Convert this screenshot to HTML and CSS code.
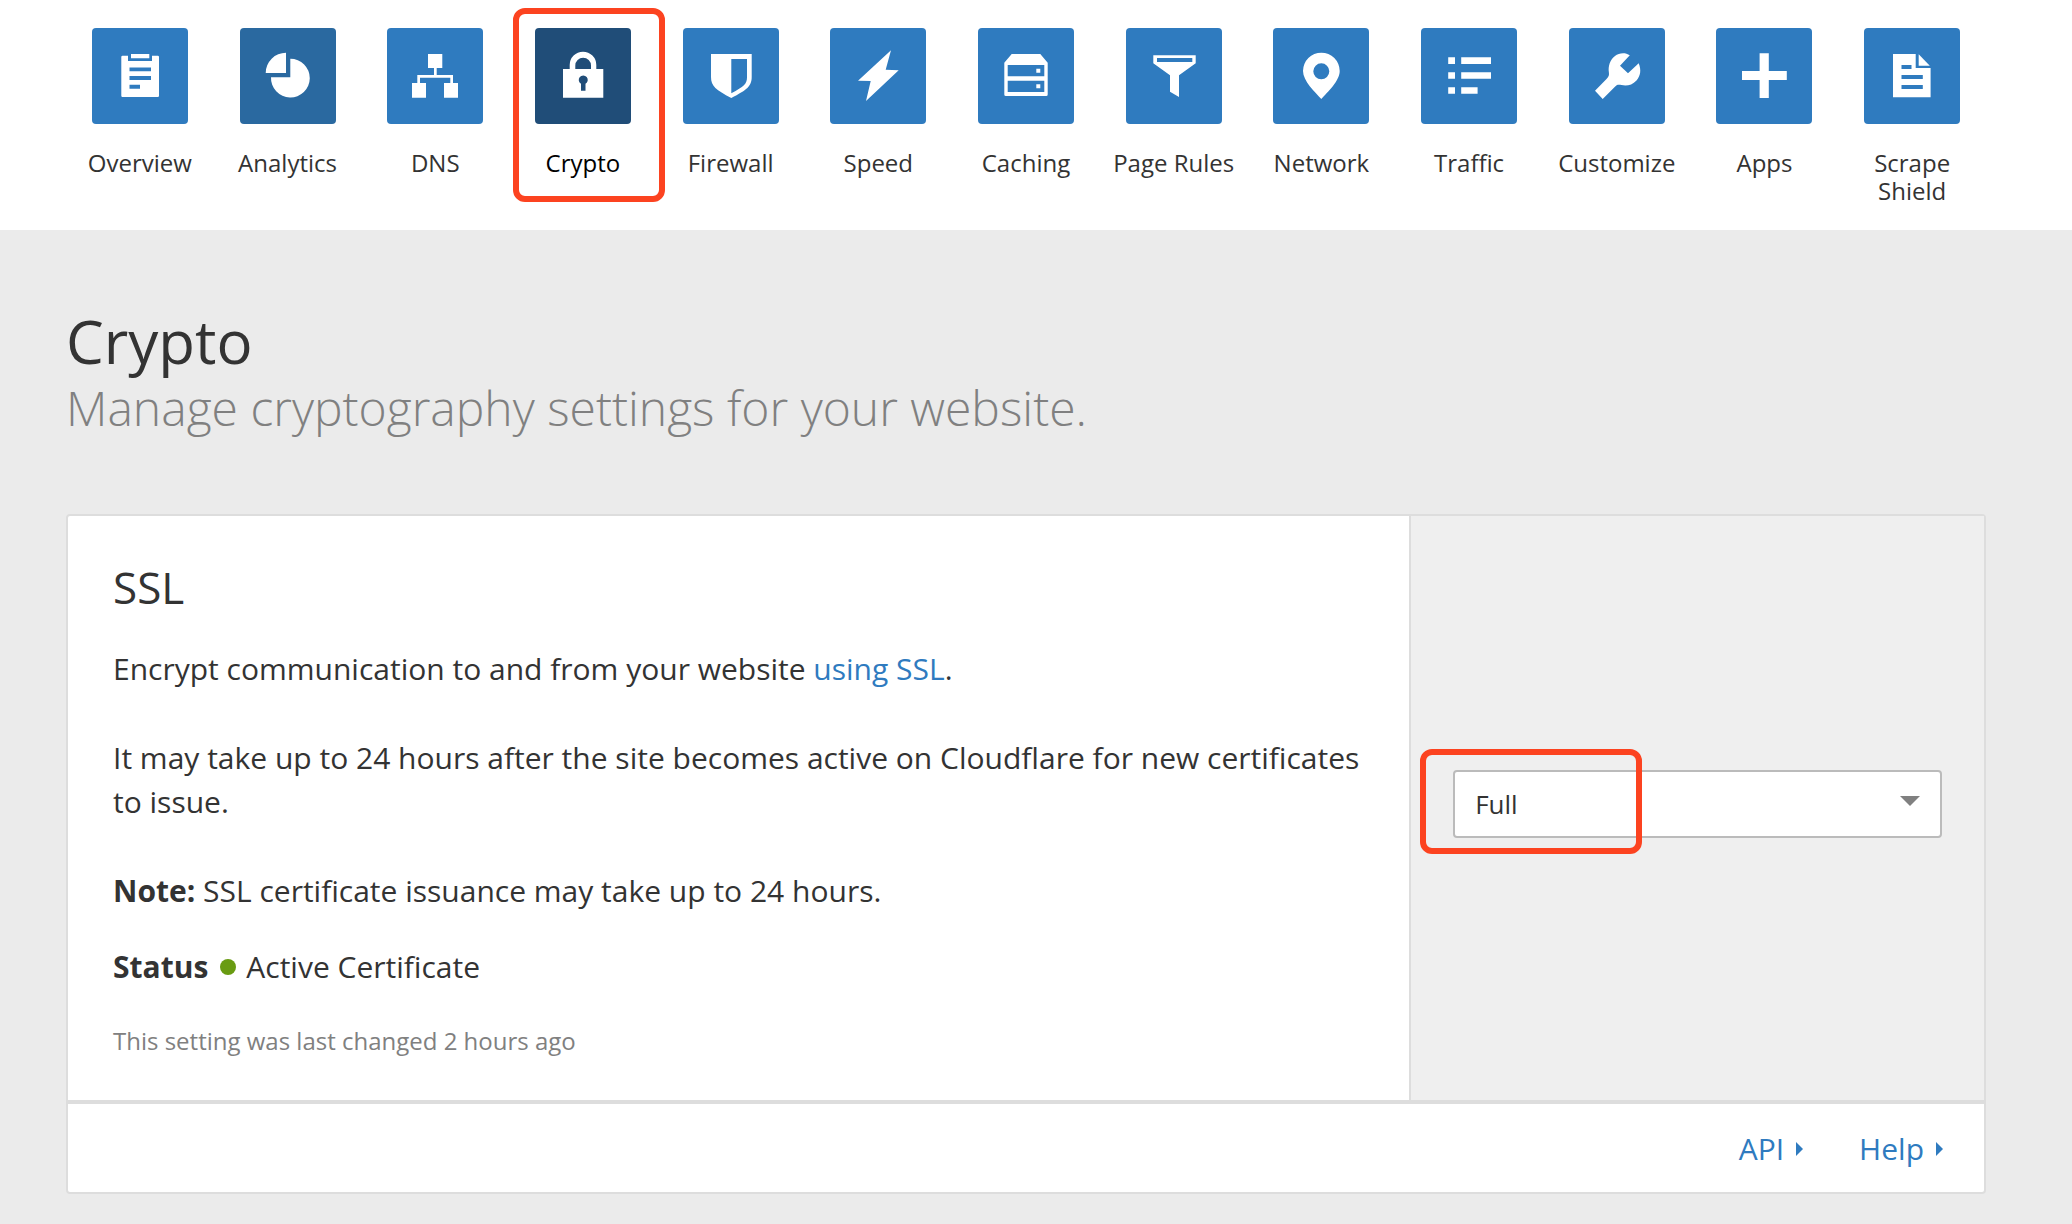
FILE: index.html
```html
<!DOCTYPE html>
<html lang="en">
<head>
  <meta charset="utf-8">
  <meta name="viewport" content="width=device-width, initial-scale=1">
  <title>Crypto</title>
  <link rel="stylesheet" href="styles.css">
</head>
<body>
  <header class="topbar">
    <nav class="nav" aria-label="Site settings">
      <a class="nav-item" href="#">
        <svg class="tile" viewBox="0 0 96 96" aria-hidden="true"><path fill-rule="evenodd" d="M30.500 27.700H36V33H60V27.700H65.800Q67 27.700 67 29V67.700Q67 69 65.800 69H30.500Q29.300 69 29.300 67.700V29Q29.300 27.700 30.500 27.700ZM37.500 39.500V43.300H59V39.500ZM37.500 48V52H59V48ZM37.500 56.700V60.700H48V56.700Z"/><path d="M39 26H57.300V30.300H39Z"/></svg>
        <span class="nav-label">Overview</span>
      </a>
      <a class="nav-item is-hovered" href="#">
        <svg class="tile" viewBox="0 0 96 96" aria-hidden="true"><path d="M46 45H25.700A20.300 20.300 0 0 1 46 24.700ZM50.300 30.700A19.400 19.400 0 1 1 31 49.300H50.300Z"/></svg>
        <span class="nav-label">Analytics</span>
      </a>
      <a class="nav-item" href="#">
        <svg class="tile" viewBox="0 0 96 96" aria-hidden="true"><path d="M41 26H55.300V40H49.700V47H66V55H71V69.700H57V55H63.300V49.700H33V55H39V69.700H25V55H30.300V47H47V40H41Z"/></svg>
        <span class="nav-label">DNS</span>
      </a>
      <a class="nav-item is-current" href="#" aria-current="page">
        <svg class="tile" viewBox="0 0 96 96" aria-hidden="true"><path fill-rule="evenodd" d="M28 41H34.700V37A13.300 13.300 0 0 1 61.300 37V41H68.300V69.700H28ZM40.300 41H56V37.500A7.850 7.850 0 0 0 40.300 37.500ZM46 55.800V62.700H50.500V55.800A4.500 4.500 0 1 0 46 55.800Z"/></svg>
        <span class="nav-label">Crypto</span>
      </a>
      <a class="nav-item" href="#">
        <svg class="tile" viewBox="0 0 96 96" aria-hidden="true"><path fill-rule="evenodd" d="M28 26H68.700V49C68.700 58 64 62 48.300 70C33 62 28 58 28 49ZM48.300 31V65.300C61 58.500 64 56 64 49V31Z"/></svg>
        <span class="nav-label">Firewall</span>
      </a>
      <a class="nav-item" href="#">
        <svg class="tile" viewBox="0 0 96 96" aria-hidden="true"><path d="M61 22.300L55.700 41.700L68.700 42.300L36 73L40.700 53L28 52.700Z"/></svg>
        <span class="nav-label">Speed</span>
      </a>
      <a class="nav-item" href="#">
        <svg class="tile" viewBox="0 0 96 96" aria-hidden="true"><path fill-rule="evenodd" d="M33.700 26H62.300L69.700 34.700V66.500Q69.700 68 68.200 68H27.800Q26.300 68 26.300 66.500V34.700ZM29.700 37V48.300H66.300V37ZM29.700 52.700V64H66.300V52.700Z"/><path d="M58.300 40.700H62.300V44.700H58.300ZM58.300 56.300H62.300V60.300H58.300Z"/></svg>
        <span class="nav-label">Caching</span>
      </a>
      <a class="nav-item" href="#">
        <svg class="tile" viewBox="0 0 96 96" aria-hidden="true"><path fill-rule="evenodd" d="M27.300 27.300H69.700V35.300L53 47.300V69L44 63.700V47.300L27.300 35.300ZM31 30V34H66.300V30Z"/></svg>
        <span class="nav-label">Page Rules</span>
      </a>
      <a class="nav-item" href="#">
        <svg class="tile" viewBox="0 0 96 96" aria-hidden="true"><path fill-rule="evenodd" d="M48.300 71C42 64 30 53 30 43A18.350 18.350 0 0 1 66.700 43C66.700 53 54.600 64 48.300 71ZM48.300 35.300A8 8 0 1 0 48.300 51.300A8 8 0 1 0 48.300 35.300Z"/></svg>
        <span class="nav-label">Network</span>
      </a>
      <a class="nav-item" href="#">
        <svg class="tile" viewBox="0 0 96 96" aria-hidden="true"><path d="M27.200 29.300H34V36H27.200ZM27.200 44.300H34V50.700H27.200ZM27.200 59.300H34V65.700H27.200ZM40.200 29.300H70V36H40.200ZM40.200 44.300H70V50.700H40.200ZM40.200 59.300H56.600V65.700H40.200Z"/></svg>
        <span class="nav-label">Traffic</span>
      </a>
      <a class="nav-item" href="#">
        <svg class="tile" viewBox="0 0 96 96" aria-hidden="true"><path d="M26 62.700L37.500 51C40 48.500 40.200 47 39.900 44.500C39 38 41 32 46 28C50 24.900 56 24 60.800 27.300L51 37.700L59 45.300L69.700 35.300C72.500 42 71.500 48 67.500 52.500C63 57.500 57.500 58 52.500 57.100C49.500 56.600 48 56.700 46.200 58.500L33.700 71Z"/></svg>
        <span class="nav-label">Customize</span>
      </a>
      <a class="nav-item" href="#">
        <svg class="tile" viewBox="0 0 96 96" aria-hidden="true"><path d="M43.600 25.300H52.800V43H70.800V52H52.800V70H43.600V52H26V43H43.600Z"/></svg>
        <span class="nav-label">Apps</span>
      </a>
      <a class="nav-item" href="#">
        <svg class="tile" viewBox="0 0 96 96" aria-hidden="true"><path fill-rule="evenodd" d="M29 26H51.700V40H66.600V69.300H29ZM37.500 37V41H47.500V37ZM37.500 47V51H58.800V47ZM37.500 57V61H58.800V57Z"/><path d="M54.700 26.300L65.800 37.700H54.700Z"/></svg>
        <span class="nav-label">Scrape Shield</span>
      </a>
    </nav>
  </header>

  <main class="page">
    <h1 class="title">Crypto</h1>
    <p class="subtitle">Manage cryptography settings for your website.</p>

    <section class="card">
      <div class="card-main">
        <div class="card-text">
          <h2 class="card-title" id="ssl-title">SSL</h2>
          <p class="text">Encrypt communication to and from your website <a class="link" href="#">using SSL</a>.</p>
          <p class="text">It may take up to 24 hours after the site becomes active on Cloudflare for new certificates to issue.</p>
          <p class="text">
            <strong>Note:</strong> SSL certificate issuance may take up to 24 hours.
          </p>
          <p class="status"><strong>Status</strong><span class="status-dot"></span>Active Certificate</p>
          <p class="changed">This setting was last changed 2 hours ago</p>
        </div>
        <div class="card-control">
          <div class="select-wrap">
            <select class="select" aria-labelledby="ssl-title">
              <option>Off</option>
              <option>Flexible</option>
              <option selected>Full</option>
              <option>Full (strict)</option>
            </select>
            <svg class="select-arrow" viewBox="0 0 20 10" aria-hidden="true"><path d="M0 0H20L10 10Z"/></svg>
          </div>
        </div>
      </div>
      <footer class="card-footer">
        <a class="link footer-link" href="#">API<svg class="caret" viewBox="0 0 7 14" aria-hidden="true"><path d="M0 0L7 7L0 14Z"/></svg></a>
        <a class="link footer-link" href="#">Help<svg class="caret" viewBox="0 0 7 14" aria-hidden="true"><path d="M0 0L7 7L0 14Z"/></svg></a>
      </footer>
    </section>
  </main>
</body>
</html>
```
FILE: styles.css
```css
*,
*::after {
  box-sizing: border-box;
}

body {
  margin: 0;
  background: #ebebeb;
  color: #333;
  font-family: "Open Sans", "Noto Sans", sans-serif;
  font-size: 30px;
  line-height: 44px;
}

h1, h2, p {
  margin: 0;
}

.topbar {
  padding: 28px 86px 25px 66px;
  background: #fff;
}

.nav {
  display: grid;
  grid-template-columns: repeat(13, 1fr);
}

.nav-item {
  position: relative;
  display: flex;
  flex-direction: column;
  align-items: center;
  gap: 25px;
  color: #333;
  text-decoration: none;
}

.tile {
  width: 96px;
  height: 96px;
  border-radius: 4px;
  background: #2f7bbf;
  fill: #fff;
}

.nav-label {
  max-width: 132px;
  font-size: 24px;
  line-height: 28px;
  text-align: center;
}

.is-hovered .tile {
  background: #2a69a0;
}

.is-current {
  color: #000;
}

.is-current .tile {
  background: #204d78;
}

/* Highlight frames, drawn over the current tab and the SSL mode */
.is-current::after,
.select-wrap::after {
  content: "";
  position: absolute;
  border: 6px solid #fc4320;
  border-radius: 12px;
  pointer-events: none;
}

.is-current::after {
  top: -20px;
  left: 4px;
  width: 152px;
  height: 194px;
}

.select-wrap::after {
  top: -21px;
  left: -33px;
  width: 222px;
  height: 105px;
}

.page {
  padding: 78px 86px 30px 66px;
}

.title {
  font-size: 60px;
  font-weight: 400;
  line-height: 67px;
}

.subtitle {
  color: #808080;
  font-size: 48px;
  font-weight: 300;
  line-height: 66px;
}

.card {
  margin-top: 73px;
  border: 2px solid #ddd;
  border-radius: 4px;
  background: #fff;
}

.card-main {
  display: grid;
  grid-template-columns: 7fr 3fr;
  border-bottom: 4px solid #ddd;
}

.card-text {
  padding: 41px 45px 37px;
}

.card-title {
  margin-bottom: 30px;
  font-size: 44px;
  font-weight: 400;
  line-height: 60px;
}

.text {
  margin-bottom: 45px;
}

.status {
  display: flex;
  align-items: center;
  margin: -13px 0 30px;
}

.status-dot {
  width: 16px;
  height: 16px;
  margin: 0 10px 0 12px;
  border-radius: 50%;
  background: #699b12;
}

.changed {
  color: #808080;
  font-size: 24px;
}

.card-control {
  display: flex;
  align-items: center;
  padding: 0 42px 8px;
  border-left: 2px solid #ddd;
  background: #efefef;
}

.select-wrap {
  position: relative;
  flex: 1;
  display: flex;
}

.select {
  width: 100%;
  height: 68px;
  padding: 0 60px 0 20px;
  border: 2px solid #bbb;
  border-radius: 4px;
  background: #fff;
  color: #333;
  font: inherit;
  font-size: 26px;
  appearance: none;
}

.select-arrow {
  position: absolute;
  top: 26px;
  right: 22px;
  width: 20px;
  height: 10px;
  fill: #808080;
  pointer-events: none;
}

.card-footer {
  display: flex;
  justify-content: flex-end;
  gap: 56px;
  padding: 23px 41px 21px;
}

.link {
  color: #2f7bbf;
  text-decoration: none;
}

.footer-link {
  display: flex;
  align-items: center;
  gap: 12px;
}

.caret {
  width: 7px;
  height: 14px;
  fill: #2f7bbf;
}
```
